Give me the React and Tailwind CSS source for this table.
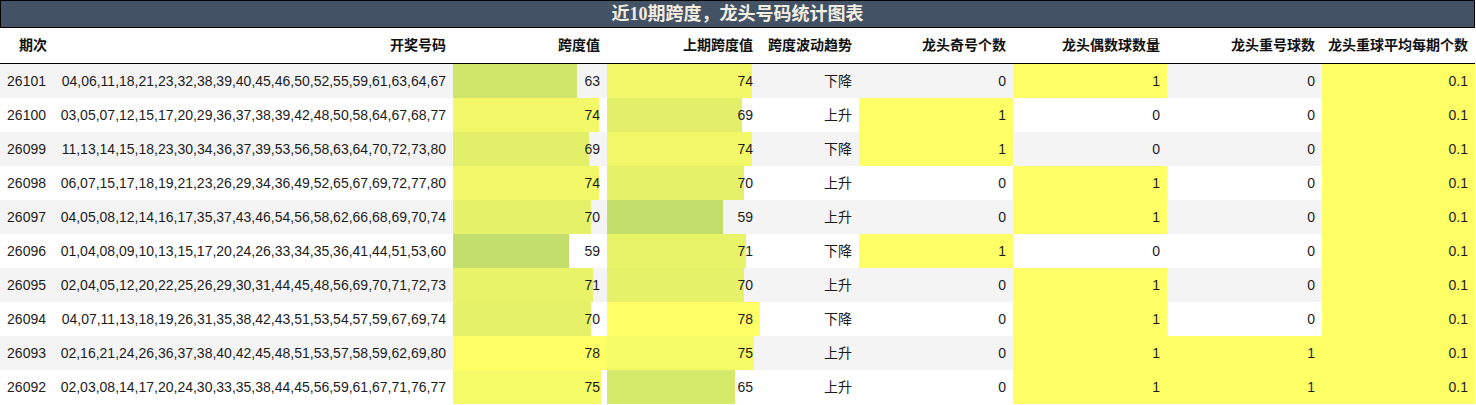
import React from 'react';

const rows = [
  { id: '26101', nums: '04,06,11,18,21,23,32,38,39,40,45,46,50,52,55,59,61,63,64,67', span: 63, prev: 74, trend: '下降', odd: 0, even: 1, rep: 0, avg: '0.1' },
  { id: '26100', nums: '03,05,07,12,15,17,20,29,36,37,38,39,42,48,50,58,64,67,68,77', span: 74, prev: 69, trend: '上升', odd: 1, even: 0, rep: 0, avg: '0.1' },
  { id: '26099', nums: '11,13,14,15,18,23,30,34,36,37,39,53,56,58,63,64,70,72,73,80', span: 69, prev: 74, trend: '下降', odd: 1, even: 0, rep: 0, avg: '0.1' },
  { id: '26098', nums: '06,07,15,17,18,19,21,23,26,29,34,36,49,52,65,67,69,72,77,80', span: 74, prev: 70, trend: '上升', odd: 0, even: 1, rep: 0, avg: '0.1' },
  { id: '26097', nums: '04,05,08,12,14,16,17,35,37,43,46,54,56,58,62,66,68,69,70,74', span: 70, prev: 59, trend: '上升', odd: 0, even: 1, rep: 0, avg: '0.1' },
  { id: '26096', nums: '01,04,08,09,10,13,15,17,20,24,26,33,34,35,36,41,44,51,53,60', span: 59, prev: 71, trend: '下降', odd: 1, even: 0, rep: 0, avg: '0.1' },
  { id: '26095', nums: '02,04,05,12,20,22,25,26,29,30,31,44,45,48,56,69,70,71,72,73', span: 71, prev: 70, trend: '上升', odd: 0, even: 1, rep: 0, avg: '0.1' },
  { id: '26094', nums: '04,07,11,13,18,19,26,31,35,38,42,43,51,53,54,57,59,67,69,74', span: 70, prev: 78, trend: '下降', odd: 0, even: 1, rep: 0, avg: '0.1' },
  { id: '26093', nums: '02,16,21,24,26,36,37,38,40,42,45,48,51,53,57,58,59,62,69,80', span: 78, prev: 75, trend: '上升', odd: 0, even: 1, rep: 1, avg: '0.1' },
  { id: '26092', nums: '02,03,08,14,17,20,24,30,33,35,38,44,45,56,59,61,67,71,76,77', span: 75, prev: 65, trend: '上升', odd: 0, even: 1, rep: 1, avg: '0.1' },
];

const MIN = 59;
const MAX = 78;

// green-yellow -> yellow scale, like a spreadsheet data bar
const barColor = (v) => {
  const t = (v - MIN) / (MAX - MIN);
  const lo = [194, 223, 108];
  const hi = [255, 255, 102];
  const c = lo.map((x, i) => Math.round(x + (hi[i] - x) * t));
  return `rgb(${c[0]},${c[1]},${c[2]})`;
};

const barStyle = (v) => {
  const w = (v / MAX) * 100;
  return { background: `linear-gradient(to right, ${barColor(v)} 0 ${w}%, transparent ${w}%)` };
};

const cols = 'grid grid-cols-[54px_399px_154px_153px_99px_154px_154px_155px_153px]';

const Cell = ({ children, hl, style, className = '' }) => (
  <div
    style={style}
    className={`flex items-center justify-end pr-[7px] ${hl ? 'bg-[#ffff66]' : ''} ${className}`}
  >
    {children}
  </div>
);

const headers = ['期次', '开奖号码', '跨度值', '上期跨度值', '跨度波动趋势', '龙头奇号个数', '龙头偶数球数量', '龙头重号球数', '龙头重球平均每期个数'];

const App = () => {
  return (
    <div className="w-[1475px] bg-white text-[14px] text-[#1c1c1c] font-['Liberation_Sans','Noto_Sans_CJK_SC',sans-serif]">
      <div className="h-[28px] border border-black bg-[#435264] flex items-center justify-center text-[18px] font-bold text-[#f3eee2] font-['Liberation_Serif','Noto_Sans_CJK_SC',serif]">
        近10期跨度，龙头号码统计图表
      </div>

      <div className={`${cols} h-[36px] border-b border-black font-bold text-[#111]`}>
        {headers.map((h) => (
          <Cell key={h}>{h}</Cell>
        ))}
      </div>

      {rows.map((r, i) => (
        <div key={r.id} className={`${cols} h-[34px] ${i % 2 === 0 ? 'bg-[#f4f4f4]' : 'bg-white'}`}>
          <Cell className="pr-[8px]">{r.id}</Cell>
          <Cell>{r.nums}</Cell>
          <Cell style={barStyle(r.span)}>{r.span}</Cell>
          <Cell style={barStyle(r.prev)} className="pr-[6px]">{r.prev}</Cell>
          <Cell>{r.trend}</Cell>
          <Cell hl={r.odd === 1}>{r.odd}</Cell>
          <Cell hl={r.even === 1}>{r.even}</Cell>
          <Cell hl={r.rep === 1}>{r.rep}</Cell>
          <Cell hl>{r.avg}</Cell>
        </div>
      ))}
    </div>
  );
};

export default App;
